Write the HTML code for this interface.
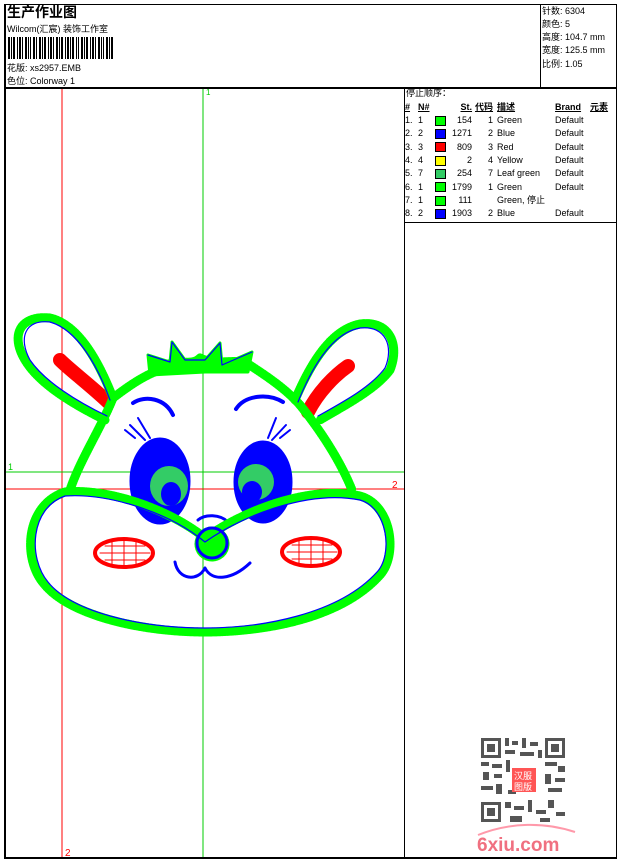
<!DOCTYPE html>
<html><head><meta charset="utf-8"><style>
body{margin:0;width:620px;height:860px;background:#fff;position:relative;overflow:hidden;font-family:"Liberation Sans","Noto Sans CJK SC",sans-serif;color:#000}
.a{position:absolute;white-space:nowrap;font-size:9px;line-height:10px}
.l{position:absolute;background:#000}
table{position:absolute;left:405px;top:101px;border-collapse:collapse;font-size:9px}
td{padding:0;height:13.3px;line-height:13px;white-space:nowrap}
.sw{display:inline-block;width:9px;height:8px;border:1px solid #000;vertical-align:middle}
.h td{font-weight:bold;text-decoration:underline;height:12px}
</style></head><body>
<div class="l" style="left:4px;top:4px;width:613px;height:1px"></div>
<div class="l" style="left:4px;top:857px;width:613px;height:2px"></div>
<div class="l" style="left:4px;top:4px;width:2px;height:855px"></div>
<div class="l" style="left:616px;top:4px;width:1px;height:855px"></div>
<div class="l" style="left:4px;top:87px;width:613px;height:2px"></div>
<div class="l" style="left:540px;top:4px;width:1px;height:84px"></div>
<div class="l" style="left:404px;top:88px;width:1px;height:770px"></div>
<div class="l" style="left:404px;top:222px;width:213px;height:1px"></div>

<div class="a" style="left:7px;top:4px;font-size:14px;line-height:16px;font-weight:bold">生产作业图</div>
<div class="a" style="left:7px;top:24px">Wilcom(汇宸) 装饰工作室</div>
<svg style="position:absolute;left:8px;top:37px" width="105" height="22">
<g fill="#000">
<rect x="0" y="0" width="2" height="22"/><rect x="3" y="0" width="1" height="22"/><rect x="5" y="0" width="2" height="22"/><rect x="9" y="0" width="1" height="22"/><rect x="11" y="0" width="2" height="22"/><rect x="14" y="0" width="1" height="22"/><rect x="17" y="0" width="2" height="22"/><rect x="20" y="0" width="1" height="22"/><rect x="22" y="0" width="1" height="22"/><rect x="25" y="0" width="2" height="22"/><rect x="28" y="0" width="1" height="22"/><rect x="31" y="0" width="2" height="22"/><rect x="34" y="0" width="1" height="22"/><rect x="36" y="0" width="2" height="22"/><rect x="40" y="0" width="1" height="22"/><rect x="42" y="0" width="2" height="22"/><rect x="45" y="0" width="1" height="22"/><rect x="48" y="0" width="2" height="22"/><rect x="51" y="0" width="1" height="22"/><rect x="53" y="0" width="2" height="22"/><rect x="57" y="0" width="1" height="22"/><rect x="59" y="0" width="2" height="22"/><rect x="62" y="0" width="1" height="22"/><rect x="64" y="0" width="2" height="22"/><rect x="68" y="0" width="1" height="22"/><rect x="70" y="0" width="1" height="22"/><rect x="73" y="0" width="2" height="22"/><rect x="76" y="0" width="1" height="22"/><rect x="78" y="0" width="2" height="22"/><rect x="82" y="0" width="1" height="22"/><rect x="84" y="0" width="2" height="22"/><rect x="87" y="0" width="1" height="22"/><rect x="90" y="0" width="2" height="22"/><rect x="93" y="0" width="1" height="22"/><rect x="95" y="0" width="1" height="22"/><rect x="98" y="0" width="2" height="22"/><rect x="101" y="0" width="1" height="22"/><rect x="103" y="0" width="2" height="22"/>
</g></svg>
<div class="a" style="left:7px;top:63px">花版: xs2957.EMB</div>
<div class="a" style="left:7px;top:76px">色位: Colorway 1</div>

<div class="a" style="left:542px;top:6px">针数: 6304</div>
<div class="a" style="left:542px;top:19px">颜色: 5</div>
<div class="a" style="left:542px;top:32px">高度: 104.7 mm</div>
<div class="a" style="left:542px;top:45px">宽度: 125.5 mm</div>
<div class="a" style="left:542px;top:59px">比例: 1.05</div>

<div class="a" style="left:406px;top:88px">停止顺序：</div>
<table>
<tr class="h"><td style="width:13px">#</td><td style="width:17px">N#</td><td style="width:17px"></td><td style="width:18px;text-align:right">St.</td><td style="width:21px;text-align:right;padding-right:4px">代码</td><td style="width:58px">描述</td><td style="width:35px">Brand</td><td>元素</td></tr>
<tr><td>1.</td><td>1</td><td><span class="sw" style="background:#0f0"></span></td><td style="text-align:right">154</td><td style="text-align:right;padding-right:4px">1</td><td>Green</td><td>Default</td><td></td></tr>
<tr><td>2.</td><td>2</td><td><span class="sw" style="background:#00f"></span></td><td style="text-align:right">1271</td><td style="text-align:right;padding-right:4px">2</td><td>Blue</td><td>Default</td><td></td></tr>
<tr><td>3.</td><td>3</td><td><span class="sw" style="background:#f00"></span></td><td style="text-align:right">809</td><td style="text-align:right;padding-right:4px">3</td><td>Red</td><td>Default</td><td></td></tr>
<tr><td>4.</td><td>4</td><td><span class="sw" style="background:#ff0"></span></td><td style="text-align:right">2</td><td style="text-align:right;padding-right:4px">4</td><td>Yellow</td><td>Default</td><td></td></tr>
<tr><td>5.</td><td>7</td><td><span class="sw" style="background:#3c6"></span></td><td style="text-align:right">254</td><td style="text-align:right;padding-right:4px">7</td><td>Leaf green</td><td>Default</td><td></td></tr>
<tr><td>6.</td><td>1</td><td><span class="sw" style="background:#0f0"></span></td><td style="text-align:right">1799</td><td style="text-align:right;padding-right:4px">1</td><td>Green</td><td>Default</td><td></td></tr>
<tr><td>7.</td><td>1</td><td><span class="sw" style="background:#0f0"></span></td><td style="text-align:right">111</td><td style="text-align:right;padding-right:4px"></td><td>Green, 停止</td><td></td><td></td></tr>
<tr><td>8.</td><td>2</td><td><span class="sw" style="background:#00f"></span></td><td style="text-align:right">1903</td><td style="text-align:right;padding-right:4px">2</td><td>Blue</td><td>Default</td><td></td></tr>
</table>

<svg style="position:absolute;left:0;top:0" width="620" height="860">
<line x1="62" y1="89" x2="62" y2="857" stroke="#f00"/>
<line x1="203" y1="89" x2="203" y2="857" stroke="#0c0"/>
<line x1="6" y1="472" x2="404" y2="472" stroke="#0c0"/>
<line x1="6" y1="489" x2="404" y2="489" stroke="#f00"/>
<text x="206" y="95" font-size="8" fill="#0c0" font-family="Liberation Sans">1</text>
<text x="8" y="470" font-size="9" fill="#0c0" font-family="Liberation Sans">1</text>
<text x="392" y="488" font-size="10" fill="#f00" font-family="Liberation Sans">2</text>
<text x="65" y="856" font-size="10" fill="#f00" font-family="Liberation Sans">2</text>

<g fill="none" stroke-linecap="round" stroke-linejoin="round">
<path d="M60 360 C70 370 90 385 108 402" stroke="#f00" stroke-width="14"/>
<path d="M348 366 C335 375 318 392 308 412" stroke="#f00" stroke-width="14"/>
<ellipse cx="160" cy="481" rx="29" ry="42" fill="#00f" stroke="#00f" stroke-width="3"/>
<ellipse cx="263" cy="482" rx="28" ry="40" fill="#00f" stroke="#00f" stroke-width="3"/>
<ellipse cx="169" cy="486" rx="19" ry="20" fill="#3c6" stroke="none"/>
<ellipse cx="171" cy="494" rx="10" ry="12" fill="#00f" stroke="none"/>
<ellipse cx="256" cy="482" rx="18" ry="18" fill="#3c6" stroke="none"/>
<ellipse cx="252" cy="492" rx="10" ry="11" fill="#00f" stroke="none"/>
<path d="M133 403 C145 395 165 398 173 415" stroke="#00f" stroke-width="4"/>
<path d="M236 409 C245 395 268 393 283 402" stroke="#00f" stroke-width="4"/>
<path d="M125 430 L135 438 M130 425 L145 440 M138 418 L150 438" stroke="#00f" stroke-width="2"/>
<path d="M290 430 L280 438 M286 425 L272 440 M276 418 L268 438" stroke="#00f" stroke-width="2"/>
<ellipse cx="124" cy="553" rx="29" ry="14" fill="#fff" stroke="#f00" stroke-width="4"/>
<ellipse cx="311" cy="552" rx="29" ry="14" fill="#fff" stroke="#f00" stroke-width="4"/>
<path d="M100 553 H150 M105 546 H145 M105 560 H145 M112 542 V566 M124 541 V567 M136 542 V566" stroke="#f00" stroke-width="1"/>
<path d="M287 552 H337 M292 545 H332 M292 559 H332 M299 541 V565 M311 540 V566 M323 541 V565" stroke="#f00" stroke-width="1"/>
<path d="M175 562 C178 580 198 582 205 568 C212 582 232 580 250 563" stroke="#00f" stroke-width="3"/>
<path d="M198 520 C205 514 220 514 228 522" stroke="#00f" stroke-width="3"/>
<path d="M148 355 L170 362 L172 342 L185 360 L205 360 L220 343 L222 365 L252 352 L248 372 L205 372 L150 375Z" fill="#0f0" stroke="#0f0" stroke-width="3"/>
<g stroke="#0f0" stroke-width="9" stroke-dasharray="1.5 1">
<path d="M113 398 C100 365 80 325 50 318 C20 315 10 335 25 360 C40 385 75 405 105 420"/>
<path d="M295 400 C310 365 330 330 360 324 C390 320 400 345 390 370 C375 390 345 405 320 420"/>
<path d="M113 398 C100 430 80 460 70 490"/>
<path d="M300 405 C320 430 340 460 352 490"/>
<path d="M113 398 C130 385 145 375 160 370 C175 355 190 368 200 358 C215 365 230 360 245 362 C265 375 285 388 300 405"/>
<path d="M65 492 C110 488 170 510 205 538 C245 510 310 485 360 496 C392 505 398 555 380 575 C340 620 260 632 205 632 C140 632 70 615 45 585 C22 560 25 505 65 492Z"/>
<circle cx="212" cy="544" r="13" fill="#0f0"/>
</g>
<g stroke="#00f" stroke-width="1.2">
<path d="M110 400 C98 367 78 330 50 322 C25 319 18 338 30 360 C45 382 78 402 107 416"/>
<path d="M298 402 C312 367 332 333 360 328 C386 325 394 347 385 368 C371 387 343 402 318 416"/>
<path d="M65 496 C110 493 170 513 205 542 C245 514 310 490 360 500 C388 508 393 555 377 572 C338 615 260 628 205 628 C140 628 72 612 48 582 C28 558 30 508 65 496Z"/>
<path d="M148 355 L170 362 L172 342 L185 360 L205 360 L220 343 L222 365 L252 352"/>
<circle cx="212" cy="543" r="15" stroke-width="3"/>
</g>
</g>

<g fill="#555">
<rect x="481" y="738" width="84" height="84" fill="#fff"/>
<rect x="481" y="738" width="20" height="20"/><rect x="484" y="741" width="14" height="14" fill="#fff"/><rect x="487" y="744" width="8" height="8"/>
<rect x="545" y="738" width="20" height="20"/><rect x="548" y="741" width="14" height="14" fill="#fff"/><rect x="551" y="744" width="8" height="8"/>
<rect x="481" y="802" width="20" height="20"/><rect x="484" y="805" width="14" height="14" fill="#fff"/><rect x="487" y="808" width="8" height="8"/>
<rect x="505" y="738" width="4" height="8"/><rect x="512" y="741" width="6" height="4"/><rect x="522" y="738" width="4" height="10"/><rect x="530" y="742" width="8" height="4"/><rect x="505" y="750" width="10" height="4"/><rect x="520" y="752" width="14" height="4"/><rect x="538" y="750" width="4" height="8"/>
<rect x="481" y="762" width="8" height="4"/><rect x="492" y="764" width="10" height="4"/><rect x="506" y="760" width="4" height="12"/><rect x="545" y="762" width="12" height="4"/><rect x="558" y="766" width="7" height="6"/>
<rect x="483" y="772" width="6" height="8"/><rect x="494" y="774" width="8" height="4"/><rect x="545" y="774" width="6" height="10"/><rect x="555" y="778" width="10" height="4"/>
<rect x="481" y="786" width="12" height="4"/><rect x="496" y="784" width="6" height="10"/><rect x="508" y="790" width="8" height="4"/><rect x="548" y="788" width="14" height="4"/>
<rect x="505" y="802" width="6" height="6"/><rect x="514" y="806" width="10" height="4"/><rect x="528" y="800" width="4" height="12"/><rect x="536" y="810" width="10" height="4"/><rect x="548" y="800" width="6" height="8"/><rect x="556" y="812" width="9" height="4"/><rect x="510" y="816" width="12" height="6"/><rect x="540" y="818" width="10" height="4"/>
</g>
<rect x="512" y="768" width="24" height="24" fill="#f55"/>
<text x="514" y="779" font-size="9" fill="#fff" font-family="Noto Sans CJK SC">汉服</text>
<text x="514" y="790" font-size="9" fill="#fff" font-family="Noto Sans CJK SC">图版</text>
<path d="M478 835 C510 822 545 822 575 832" stroke="#f9a" stroke-width="2" fill="none"/>
<text x="477" y="851" font-size="19" font-weight="bold" fill="#f07080" font-family="Liberation Sans">6xiu.com</text>
</svg>
</body></html>
